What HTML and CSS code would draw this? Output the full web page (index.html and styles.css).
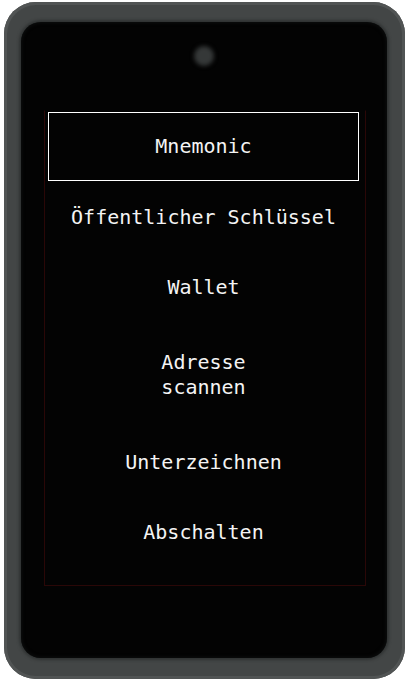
FILE: index.html
```html
<!DOCTYPE html>
<html lang="de">
<head>
<meta charset="utf-8">
<title>Menü</title>
<link rel="stylesheet" href="styles.css">
</head>
<body>
<div class="device">
  <div class="bezel">
    <div class="camera"></div>
    <div class="screen">
      <ul class="menu">
        <li class="item selected">Mnemonic</li>
        <li class="item">Öffentlicher Schlüssel</li>
        <li class="item">Wallet</li>
        <li class="item tall">Adresse<br>scannen</li>
        <li class="item">Unterzeichnen</li>
        <li class="item">Abschalten</li>
      </ul>
    </div>
  </div>
</div>
</body>
</html>
```
FILE: styles.css
```css
html, body {
  margin: 0;
  background: #ffffff;
}
body {
  width: 408px;
  height: 683px;
  padding: 2px 0 0 4px;
  box-sizing: border-box;
  overflow: hidden;
}
.device {
  width: 401px;
  height: 677px;
  box-sizing: border-box;
  border-radius: 32px;
  background: #434646;
  padding: 20px 18px 21px 17px;
  box-shadow: inset 0 0 0 3px #515454, inset 2px 2px 2px rgba(255, 255, 255, 0.07);
}
.bezel {
  height: 100%;
  background: #030303;
  border-radius: 20px;
  box-shadow: 0 0 3px 2px #2f3232, inset 0 0 4px #121414;
  overflow: hidden;
}
.camera {
  width: 20px;
  height: 20px;
  border-radius: 50%;
  background: #353838;
  filter: blur(2px);
  margin: 24px auto 0;
}
.screen {
  margin: 44px 0 0 23px;
  width: 322px;
  height: 476px;
  box-sizing: border-box;
  border: 1px solid #2a0707;
  border-top-color: transparent;
}
.menu {
  list-style: none;
  margin: 0;
  padding: 1px 0 0 3px;
  width: 311px;
}
.item {
  height: 70px;
  display: flex;
  align-items: center;
  justify-content: center;
  text-align: center;
  font: 20px/25px "DejaVu Sans Mono", monospace;
  color: #f4f4f4;
  white-space: nowrap;
}
.selected {
  height: 69px;
  margin-bottom: 1px;
  box-sizing: border-box;
  border: 1px solid #ffffff;
}
.tall {
  height: 105px;
}
```
